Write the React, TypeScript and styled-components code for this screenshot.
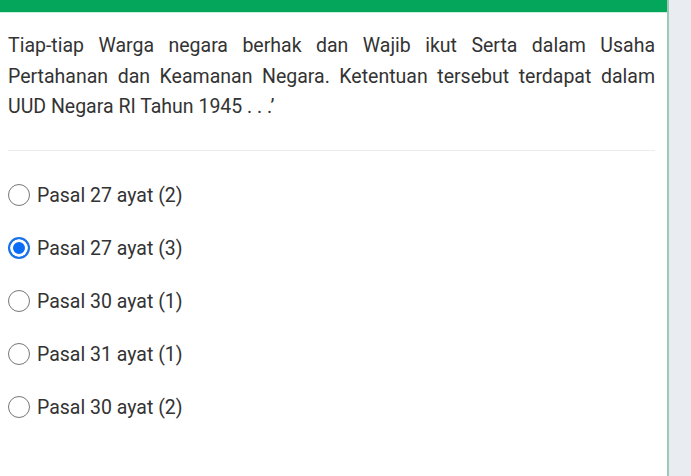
import React from 'react';
import styled, { createGlobalStyle } from 'styled-components';

const GlobalStyle = createGlobalStyle`
  html, body {
    margin: 0;
    padding: 0;
    background: #e9edf2;
  }
  body {
    font-family: Roboto, "Noto Sans", sans-serif;
    color: #333;
  }
`;

const Page = styled.div`
  display: flex;
  width: 691px;
  height: 476px;
  overflow: hidden;
  background: #e9edf2;
`;

const Card = styled.div`
  width: 667px;
  flex-shrink: 0;
  background: #fff;
  border-right: 2px solid #9dc9b6;
  display: flex;
  flex-direction: column;
`;

const TopBar = styled.div`
  height: 12px;
  background: #03a65a;
  border-bottom: 1px solid #c9efdc;
`;

const Body = styled.div`
  padding: 18px 12px 0 8px;
`;

const Question = styled.p`
  margin: 0;
  font-size: 19.5px;
  line-height: 30.5px;
  text-align: justify;
  color: #333;
`;

const Divider = styled.hr`
  margin: 27px 0 0;
  border: none;
  border-top: 1px solid #ececec;
`;

const Options = styled.div`
  display: flex;
  flex-direction: column;
  gap: 30px;
  padding-top: 33px;
`;

const Option = styled.label`
  display: flex;
  align-items: center;
  gap: 7px;
  font-size: 19.5px;
  line-height: 23px;
  color: #333;
`;

const Radio = styled.span<{ $checked?: boolean }>`
  width: 22px;
  height: 22px;
  box-sizing: border-box;
  border-radius: 50%;
  flex-shrink: 0;
  border: ${({ $checked }) => ($checked ? '2px solid #1a73e8' : '1.5px solid #777')};
  background: ${({ $checked }) => ($checked ? '#0b6df5' : '#fff')};
  box-shadow: ${({ $checked }) => ($checked ? 'inset 0 0 0 3px #fff' : 'none')};
`;

const options = [
  'Pasal 27 ayat (2)',
  'Pasal 27 ayat (3)',
  'Pasal 30 ayat (1)',
  'Pasal 31 ayat (1)',
  'Pasal 30 ayat (2)',
];

export default function App() {
  return (
    <Page>
      <GlobalStyle />
      <Card>
        <TopBar />
        <Body>
          <Question>
            Tiap-tiap Warga negara berhak dan Wajib ikut Serta dalam Usaha Pertahanan dan Keamanan
            Negara. Ketentuan tersebut terdapat dalam UUD Negara RI Tahun 1945 . . .’
          </Question>
          <Divider />
          <Options>
            {options.map((o, i) => (
              <Option key={o}>
                <Radio $checked={i === 1} />
                {o}
              </Option>
            ))}
          </Options>
        </Body>
      </Card>
    </Page>
  );
}
